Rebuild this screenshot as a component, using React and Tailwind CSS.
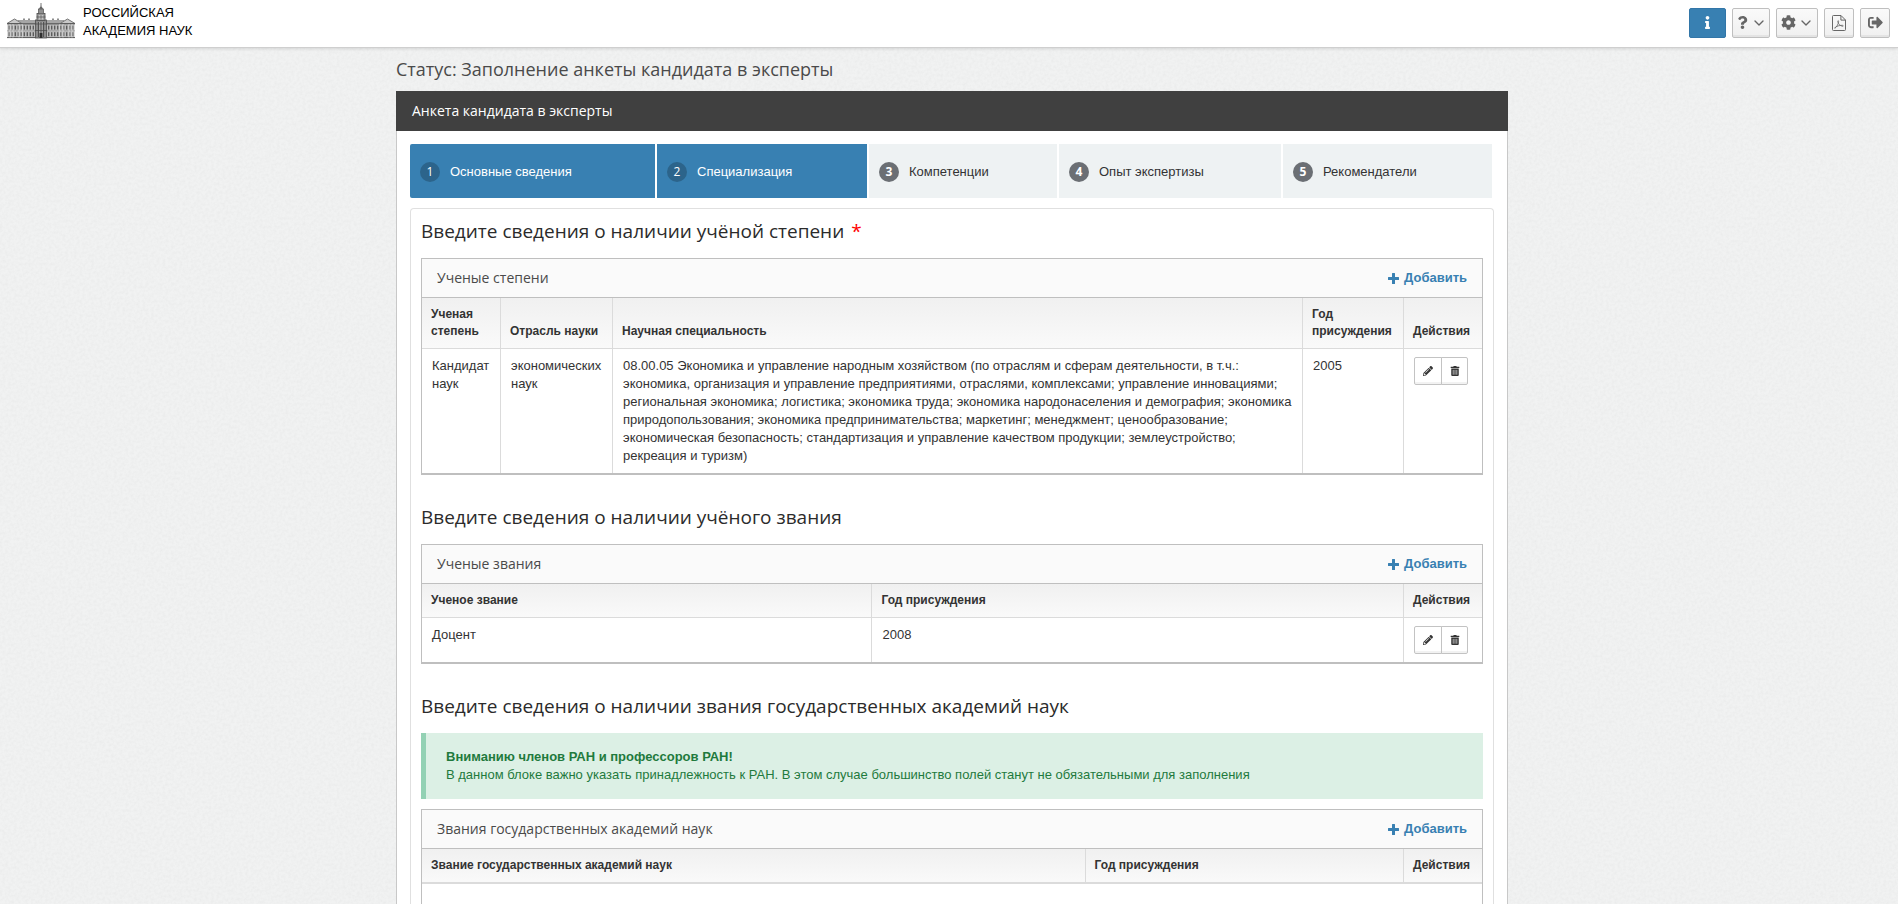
import { FaInfo, FaQuestion, FaCog, FaSignOutAlt, FaPencilAlt, FaTrashAlt } from "react-icons/fa";
import { ChevronDown } from "lucide-react";

const steps = [
  { n: 1, label: "Основные сведения", done: true },
  { n: 2, label: "Специализация", done: true },
  { n: 3, label: "Компетенции", done: false },
  { n: 4, label: "Опыт экспертизы", done: false },
  { n: 5, label: "Рекомендатели", done: false },
];

function range(n) {
  return Array.from({ length: n }, (_, i) => i);
}

function AcademyLogo() {
  return (
    <svg viewBox="0 0 68 36" className="h-9 w-[68px]" role="img" aria-label="Здание академии наук">
      {/* side wings */}
      {[0, 1].map((side) => (
        <g key={side} transform={side ? "translate(68 0) scale(-1 1)" : undefined}>
          <rect x="0.5" y="20" width="28" height="15" fill="#bdbdbd" />
          <path d="M0 20.5 7.5 16 15 20.5Z" fill="#c9c9c9" stroke="#666" strokeWidth="0.9" />
          <path d="M11 17.5H28.5V21H15.5Z" fill="#a6a6a6" stroke="#777" strokeWidth="0.5" />
          <path d="M0 20.8H28.5M0 34.6H28.5" stroke="#555" strokeWidth="1" />
          <path d="M0 27.8H28.5" stroke="#8a8a8a" strokeWidth="0.6" />
          {range(9).map((i) => (
            <g key={i} fill="#5c5c5c">
              <rect x={1.6 + i * 3} y="22.6" width="1.4" height="4" />
              <rect x={1.6 + i * 3} y="29.2" width="1.4" height="4" />
            </g>
          ))}
          <path d="M3 21V34.5M6 21V34.5M12 21V34.5M15.2 21V34.5" stroke="#e6e6e6" strokeWidth="0.7" />
          <path d="M17 17V15.6M22 17V15.6" stroke="#444" strokeWidth="1.2" />
        </g>
      ))}
      {/* central tower */}
      <rect x="28.5" y="17" width="11" height="18" fill="#8b8b8b" stroke="#4b4b4b" strokeWidth="0.8" />
      <rect x="30" y="10.5" width="8" height="7" fill="#a0a0a0" stroke="#4b4b4b" strokeWidth="0.8" />
      <rect x="31.4" y="6" width="5.2" height="4.8" fill="#8f8f8f" stroke="#555" strokeWidth="0.7" />
      <path d="M31.8 6 34 2.6 36.2 6Z" fill="#666" />
      <path d="M34 0V3" stroke="#666" strokeWidth="0.9" />
      <path d="M31.7 19V34M34 19V34M36.3 19V34" stroke="#3d3d3d" strokeWidth="0.9" />
      <path d="M32.8 19V34M35.2 19V34M32.5 12V16.5M35.5 12V16.5" stroke="#dcdcdc" strokeWidth="0.6" />
      <path d="M28 21H40M28 27.5H40M29.5 14H38.5" stroke="#4a4a4a" strokeWidth="0.7" />
      <rect x="32.6" y="30" width="2.8" height="5" fill="#2f2f2f" />
    </svg>
  );
}

function PdfIcon() {
  return (
    <svg viewBox="0 0 14 16" className="h-4 w-[14px]" fill="none" stroke="currentColor" aria-hidden="true">
      <path d="M1.4.5H9L13.5 5V14.6Q13.5 15.5 12.6 15.5H1.4Q.5 15.5.5 14.6V1.4Q.5.5 1.4.5Z" />
      <path d="M8.9.7V5.1H13.3" />
      <path d="M3 13.2C4.6 12.2 6.6 8.6 6.6 6.4 6.6 5.2 5.6 5.4 5.8 6.6 6.2 8.8 8 10.8 10.6 11.3 11.9 11.4 11.4 10.2 10 10.3 7.4 10.4 5 11.1 3.4 12.2 2.4 13 2.6 13.5 3 13.2Z" strokeWidth="0.8" />
    </svg>
  );
}

function PlusIcon() {
  return (
    <svg viewBox="0 0 11 11" className="size-[11px]" fill="currentColor" aria-hidden="true">
      <path d="M4.5 0H6.5Q7 0 7 .5V4H10.5Q11 4 11 4.5V6.5Q11 7 10.5 7H7V10.5Q7 11 6.5 11H4.5Q4 11 4 10.5V7H.5Q0 7 0 6.5V4.5Q0 4 .5 4H4V.5Q4 0 4.5 0Z" />
    </svg>
  );
}

function PaperTexture() {
  return (
    <svg className="absolute inset-0 -z-10 h-full w-full" aria-hidden="true">
      <filter id="paper" x="0" y="0" width="100%" height="100%">
        <feTurbulence type="fractalNoise" baseFrequency="0.35" numOctaves="3" stitchTiles="stitch" />
        <feColorMatrix values="0 0 0 0 0.45  0 0 0 0 0.45  0 0 0 0 0.45  0.18 0 0 0 -0.06" />
      </filter>
      <rect width="100%" height="100%" filter="url(#paper)" />
    </svg>
  );
}

function HeaderButton({ label, menu, className = "px-2", children }) {
  return (
    <button
      type="button"
      aria-label={label}
      className={`flex h-[30px] items-center justify-center gap-[2px] rounded-xs border border-[#bfbfbf] bg-linear-to-b from-[#fafafa] to-[#f0f0f0] text-[#666] shadow-[inset_0_-2px_0_rgba(0,0,0,0.05)] ${className}`}
    >
      {children}
      {menu && <ChevronDown size={16} strokeWidth={2} />}
    </button>
  );
}

function Step({ n, label, done }) {
  return (
    <li className={`flex h-[54px] items-center gap-[10px] px-[10px] pt-[2px] ${done ? "bg-[#3880b2] text-white first:rounded-l-xs" : "bg-[#eef2f3] text-[#333]"}`}>
      <span className={`flex size-5 items-center justify-center rounded-full font-['Open_Sans',sans-serif] text-[12px] leading-5 text-white ${done ? "bg-[#2c648b]" : "bg-[#6b6f74] font-bold"}`}>
        {n}
      </span>
      <span className="whitespace-nowrap">{label}</span>
    </li>
  );
}

function Heading({ children }) {
  return <h2 className="mb-[17px] font-['Open_Sans',sans-serif] text-[19px] leading-5 font-medium text-[#2b2b2b]">{children}</h2>;
}

function GridBox({ title, className = "border-b-2", children }) {
  return (
    <div className={`border border-[#bfbfbf] ${className}`}>
      <div className="flex h-[39px] items-center justify-between border-b border-[#bfbfbf] bg-[#fafafa] px-[15px]">
        <h3 className="font-['Open_Sans',sans-serif] text-[14px] leading-5 text-[#4a4a4a]">{title}</h3>
        <a href="#add" className="flex items-center gap-[5px] font-bold text-[#3880b2]">
          <PlusIcon />
          Добавить
        </a>
      </div>
      {children}
    </div>
  );
}

function Th({ className = "", children }) {
  return (
    <th scope="col" className={`border-b border-l border-[#dbdbdb] px-[9px] py-2 text-left align-bottom text-[12px] leading-[17px] font-bold first:border-l-0 ${className}`}>
      {children}
    </th>
  );
}

function Td({ children }) {
  return <td className="border-l border-[#dbdbdb] py-2 pr-2 pl-[10px] align-top leading-[18px] first:border-l-0">{children}</td>;
}

function RowActions() {
  return (
    <div className="flex">
      <button type="button" aria-label="Изменить" className="flex h-7 w-[28px] items-center justify-center rounded-l-xs border border-[#c3c3c3] bg-white text-[#333] shadow-[inset_0_-2px_0_rgba(0,0,0,0.05)]">
        <FaPencilAlt size={10} />
      </button>
      <button type="button" aria-label="Удалить" className="-ml-px flex h-7 w-[27px] items-center justify-center rounded-r-xs border border-[#c3c3c3] bg-white text-[#333] shadow-[inset_0_-2px_0_rgba(0,0,0,0.05)]">
        <FaTrashAlt size={10} />
      </button>
    </div>
  );
}

const tableClass = "w-full border-separate border-spacing-0";
const theadClass = "bg-linear-to-b from-[#f0f0f0] to-[#fafafa]";

export default function App() {
  return (
    <div className="relative isolate flex min-h-screen flex-col bg-[#f1f2f2] font-['Liberation_Sans',sans-serif] text-[13px] leading-[18px] text-[#333]">
      <PaperTexture />
      <header className="flex h-12 items-center justify-between border-b border-[#cfcfcf] bg-white pr-2 pl-[7px] shadow-[0_1px_3px_rgba(0,0,0,0.12)]">
        <a href="#home" className="flex items-center gap-2 text-black">
          <span className="-mt-[5px]"><AcademyLogo /></span>
          <span className="-mt-1">
            РОССИЙСКАЯ
            <br />
            АКАДЕМИЯ НАУК
          </span>
        </a>
        <nav className="mb-[2px] flex gap-[6px]">
          <button type="button" aria-label="Информация" className="flex h-[30px] w-[37px] items-center justify-center rounded-xs border border-[#3276a8] bg-[#3880b2] text-white">
            <FaInfo size={13} />
          </button>
          <HeaderButton label="Помощь" menu className="w-[38px]">
            <FaQuestion size={13} />
          </HeaderButton>
          <HeaderButton label="Настройки" menu className="w-[42px]">
            <FaCog size={15} />
          </HeaderButton>
          <HeaderButton label="Скачать PDF" className="w-[30px]">
            <PdfIcon />
          </HeaderButton>
          <HeaderButton label="Выйти" className="w-[30px]">
            <FaSignOutAlt size={15} />
          </HeaderButton>
        </nav>
      </header>

      <main className="flex flex-1 flex-col items-center pl-[6px]">
        <div className="flex w-full max-w-[1112px] flex-1 flex-col">
          <h1 className="mt-2 mb-[9px] font-['Open_Sans',sans-serif] text-[18px] leading-[26px] text-[#4a4a4a]">
            Статус: Заполнение анкеты кандидата в эксперты
          </h1>
          <h2 className="bg-[#404040] px-4 font-['Open_Sans',sans-serif] text-[14px] leading-10 text-white">Анкета кандидата в эксперты</h2>

          <div className="flex flex-1 flex-col border-x border-[#c8c8c8] bg-white px-[13px] pt-[13px]">
            <ol className="grid grid-cols-[245fr_210fr_188fr_222fr_209fr] gap-[2px] pr-[2px]">
              {steps.map((s) => (
                <Step key={s.n} {...s} />
              ))}
            </ol>

            <div className="mt-[10px] flex flex-1 flex-col gap-8 rounded-t-sm border border-b-0 border-[#e0e0e0] px-[10px] pt-3">
              <section>
                <Heading>
                  Введите сведения о наличии учёной степени <span className="ml-[2px] text-[#f00]">*</span>
                </Heading>
                <GridBox title="Ученые степени">
                  <table className={tableClass}>
                    <thead className={theadClass}>
                      <tr>
                        <Th className="w-[78px]">Ученая степень</Th>
                        <Th className="w-[112px]">Отрасль науки</Th>
                        <Th>Научная специальность</Th>
                        <Th className="w-[101px]">Год присуждения</Th>
                        <Th className="w-[79px]">Действия</Th>
                      </tr>
                    </thead>
                    <tbody>
                      <tr>
                        <Td>Кандидат наук</Td>
                        <Td>экономических наук</Td>
                        <Td>
                          08.00.05 Экономика и управление народным хозяйством (по отраслям и сферам деятельности, в т.ч.: экономика,
                          организация и управление предприятиями, отраслями, комплексами; управление инновациями; региональная
                          экономика; логистика; экономика труда; экономика народонаселения и демография; экономика
                          природопользования; экономика предпринимательства; маркетинг; менеджмент; ценообразование; экономическая
                          безопасность; стандартизация и управление качеством продукции; землеустройство; рекреация и туризм)
                        </Td>
                        <Td>2005</Td>
                        <Td><RowActions /></Td>
                      </tr>
                    </tbody>
                  </table>
                </GridBox>
              </section>

              <section>
                <Heading>Введите сведения о наличии учёного звания</Heading>
                <GridBox title="Ученые звания">
                  <table className={tableClass}>
                    <thead className={theadClass}>
                      <tr>
                        <Th className="w-[42.4%]">Ученое звание</Th>
                        <Th>Год присуждения</Th>
                        <Th className="w-[79px]">Действия</Th>
                      </tr>
                    </thead>
                    <tbody>
                      <tr>
                        <Td>Доцент</Td>
                        <Td>2008</Td>
                        <Td><RowActions /></Td>
                      </tr>
                    </tbody>
                  </table>
                </GridBox>
              </section>

              <section className="flex flex-1 flex-col">
                <Heading>Введите сведения о наличии звания государственных академий наук</Heading>
                <div className="mb-[10px] border-l-[5px] border-[#93d1b4] bg-[#dcf0e5] px-5 py-[15px] text-[#1f7a3d]">
                  <strong className="block font-bold">Вниманию членов РАН и профессоров РАН!</strong>
                  <p>В данном блоке важно указать принадлежность к РАН. В этом случае большинство полей станут не обязательными для заполнения</p>
                </div>
                <GridBox title="Звания государственных академий наук" className="flex-1 border-b-0">
                  <table className={tableClass}>
                    <thead className={theadClass}>
                      <tr>
                        <Th className="w-[62.5%] border-b-2">Звание государственных академий наук</Th>
                        <Th className="border-b-2">Год присуждения</Th>
                        <Th className="w-[79px] border-b-2">Действия</Th>
                      </tr>
                    </thead>
                  </table>
                </GridBox>
              </section>
            </div>
          </div>
        </div>
      </main>
    </div>
  );
}
